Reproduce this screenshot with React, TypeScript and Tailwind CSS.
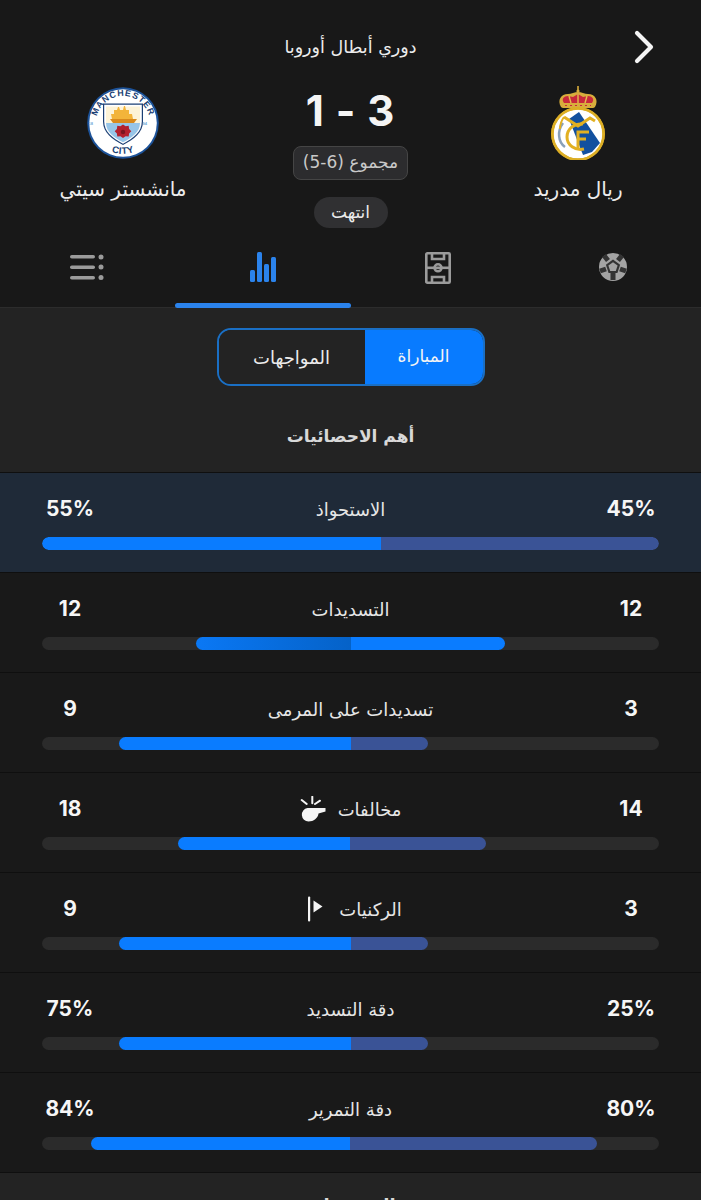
import React from 'react';

const sans = 'font-["Inter","DejaVu_Sans",sans-serif]';

interface StatRow {
  label: string;
  home: string;
  away: string;
  homeWidth: number;
  awayWidth: number;
  icon?: React.ReactNode;
  homeColor?: string;
  awayColor?: string;
}

function WhistleIcon() {
  return (
    <svg width="26" height="26" viewBox="0 0 26 26" fill="#f4f4f4" stroke="none">
      <path d="M7.500 12H25.500v3.500l-7 2c-.5 4.500-5 8-10 8A6.800 6.800 0 0 1 7.500 12z" />
      <path d="M1.700 4l5 4M12.300 .7v6.600M20 4.700L15 8" stroke="#f4f4f4" strokeWidth="2" strokeLinecap="round" />
    </svg>
  );
}

function CornerFlagIcon() {
  return (
    <svg className="ml-[8px]" width="20" height="26" viewBox="0 0 20 26" fill="#f4f4f4">
      <rect x="1" y="0.500" width="2.200" height="25" rx="1" />
      <path d="M6.500 4.500L15.500 10.500 6.500 16.500z" />
    </svg>
  );
}

const stats: StatRow[] = [
  { label: 'الاستحواذ', home: '45%', away: '55%', homeWidth: 45, awayWidth: 55 },
  {
    label: 'التسديدات',
    home: '12',
    away: '12',
    homeWidth: 25,
    awayWidth: 25,
    homeColor: 'bg-[#0a7cff]',
    awayColor: 'bg-gradient-to-r from-[#0a78f5] to-[#0562c8]',
  },
  { label: 'تسديدات على المرمى', home: '3', away: '9', homeWidth: 12.5, awayWidth: 37.5 },
  { label: 'مخالفات', home: '14', away: '18', homeWidth: 22, awayWidth: 28, icon: <WhistleIcon /> },
  { label: 'الركنيات', home: '3', away: '9', homeWidth: 12.5, awayWidth: 37.5, icon: <CornerFlagIcon /> },
  { label: 'دقة التسديد', home: '25%', away: '75%', homeWidth: 12.5, awayWidth: 37.5 },
  { label: 'دقة التمرير', home: '80%', away: '84%', homeWidth: 40, awayWidth: 42 },
];

function CityCrest() {
  return (
    <svg width="72" height="72" viewBox="0 0 72 72">
      <defs>
        <path id="cityTop" d="M9 36a27 27 0 0 1 54 0" />
        <path id="cityBottom" d="M5 36a31 31 0 0 0 62 0" />
      </defs>
      <circle cx="36" cy="36" r="35.800" fill="#1c5299" />
      <circle cx="36" cy="36" r="33.800" fill="#fff" />
      <text fontFamily="Liberation Sans, sans-serif" fontWeight="700" fontSize="8.800" fill="#1b3f74" letterSpacing="0.900">
        <textPath href="#cityTop" startOffset="50%" textAnchor="middle">MANCHESTER</textPath>
      </text>
      <text fontFamily="Liberation Sans, sans-serif" fontWeight="700" fontSize="9.500" fill="#1b3f74" letterSpacing="0.500">
        <textPath href="#cityBottom" startOffset="50%" textAnchor="middle">CITY</textPath>
      </text>
      <text x="6" y="38" fontSize="4" fontFamily="Liberation Sans, sans-serif" fontWeight="700" fill="#6fa8d6">18</text>
      <text x="60" y="38" fontSize="4" fontFamily="Liberation Sans, sans-serif" fontWeight="700" fill="#6fa8d6">94</text>
      <path d="M16 16.500h40v18c0 11-9 18-20 23.500-11-5.500-20-12.500-20-23.500z" fill="#1b3f74" />
      <path d="M17.200 17.700h37.600v16.800c0 10-8 16.500-18.800 22.200-10.800-5.700-18.800-12.200-18.800-22.200z" fill="#fff" />
      <path d="M19 19.500h34V36H19z" fill="#fdf3d7" />
      <path d="M19 36h34c0 9-8 14.500-17 19.200C27 50.500 19 45 19 36z" fill="#97c5e8" />
      <path d="M25 32l-1-5h3v-4h3l1-3h1l1 3h3l1-4h1l1 4h3v4h3l1 5z" fill="#f3b43a" />
      <path d="M23 32h27l-3 4H26z" fill="#d98a1d" />
      <path d="M36 37.500l2.600 1.700 3.100-.4.400 3.100 2.200 2.300-2.200 2.300-.4 3.100-3.100-.4-2.600 1.700-2.600-1.700-3.100.4-.4-3.100-2.200-2.300 2.200-2.300.4-3.100 3.100.4z" fill="#b3202e" />
      <circle cx="36" cy="45" r="2.200" fill="#7a1520" />
    </svg>
  );
}

function MadridCrest() {
  return (
    <svg width="56" height="74" viewBox="0 0 56 74">
      <path d="M27.200 0h1.600v4h-1.600z" fill="#d8ad3c" />
      <circle cx="28" cy="5" r="1.600" fill="#d8ad3c" />
      <path d="M11 21c-4-7 0-13 7-13 3 0 7-2 10-2s7 2 10 2c7 0 11 6 7 13z" fill="#d8ad3c" />
      <path d="M14 17c-3-4 0-7 4-7l5 1 5-3 5 3 5-1c4 0 7 3 4 7z" fill="#c8283c" />
      <path d="M19 10l2 7M28 8v9M37 10l-2 7" stroke="#e5bd4c" strokeWidth="1.400" />
      <rect x="11" y="17" width="34" height="5" rx="2" fill="#d8ad3c" />
      <path d="M15 19.500h26" stroke="#c8283c" strokeWidth="1.200" strokeDasharray="2 3" />
      <circle cx="28" cy="48" r="27" fill="#dcae25" />
      <circle cx="28" cy="48" r="24.500" fill="#fff" />
      <path d="M19 33l10-7 21 31-8 9-9 3z" fill="#12509f" />
      <path d="M13 37c-6 8-5 19 2 24" fill="none" stroke="#8aa0b8" strokeWidth="2.500" />
      <path d="M14 31l14 9 12-8 5 3" fill="none" stroke="#e2b022" strokeWidth="3" />
      <path d="M14 31c-3 4-4 8-4 12" fill="none" stroke="#e2b022" strokeWidth="2" />
      <path d="M33 38c-9-1-16 5-16 13s8 14 17 12" fill="none" stroke="#e2b022" strokeWidth="3" />
      <path d="M28 63V46h11M28 53h8" fill="none" stroke="#e2b022" strokeWidth="3" />
      <circle cx="28" cy="48" r="25.500" fill="none" stroke="#dcae25" strokeWidth="2.500" />
    </svg>
  );
}

function ScoreHeader() {
  return (
    <div className="grid grid-cols-[246px_1fr_246px] mt-[22px]">
      <div className="flex flex-col items-center">
        <div className="h-[74px]"><MadridCrest /></div>
        <div className="mt-[14px] text-[20px] leading-[30px] text-[#ececec]">ريال مدريد</div>
      </div>
      <div className="flex flex-col items-center">
        <div dir="ltr" className={`${sans} text-[42px] font-bold leading-[50px] text-[#f4f4f4] tracking-[1px] whitespace-pre`}>1 - 3</div>
        <div className="mt-[10px] h-[34px] w-[115px] flex items-center justify-center rounded-[8px] border border-[#454545] bg-[#2c2c2e] text-[17px] text-[#c9c9c9]">
          مجموع (6-5)
        </div>
        <div className="mt-[17px] h-[31px] w-[74px] flex items-center justify-center rounded-full bg-[#303032] text-[17px] text-[#ececec]">
          انتهت
        </div>
      </div>
      <div className="flex flex-col items-center">
        <div className="h-[74px] pt-[1px]"><CityCrest /></div>
        <div className="mt-[14px] text-[20px] leading-[30px] text-[#ececec]">مانشستر سيتي</div>
      </div>
    </div>
  );
}

function TabBar() {
  return (
    <div className="grid grid-cols-4 mt-[24px] h-[56px] border-b border-[#2c2c2c]">
      <div className="flex justify-center">
        <svg width="30" height="30" viewBox="0 0 30 30">
          <circle cx="15" cy="15" r="14" fill="#a3a3a3" />
          <path d="M15 7.500l7.100 5.200-2.700 8.300h-8.800l-2.700-8.300z" fill="#333" />
          <path d="M20 8.500L24 3.500M22 17L28 19M15 21v7M8 17L2 19M10 8.500L6 3.500" stroke="#333" strokeWidth="5" />
          <path d="M15 10.200l4.600 3.300-1.800 5.400h-5.600l-1.800-5.400z" fill="#a3a3a3" />
        </svg>
      </div>
      <div className="flex justify-center">
        <svg width="26" height="32" viewBox="0 0 26 32" fill="none" stroke="#9b9b9b" strokeWidth="2.600">
          <rect x="1.300" y="1.300" width="23.400" height="29.400" rx="1" />
          <path d="M1 15.800h24" />
          <circle cx="13" cy="15.800" r="3.500" />
          <path d="M7 1v6h12V1M7 31v-6h12v6" />
        </svg>
      </div>
      <div className="relative flex justify-center">
        <svg width="26" height="30" viewBox="0 0 26 30" fill="#2b83ec">
          <rect x="0" y="18" width="5" height="12" rx="1.500" />
          <rect x="7" y="0" width="5" height="30" rx="1.500" />
          <rect x="14" y="12" width="5" height="18" rx="1.500" />
          <rect x="21" y="5" width="5" height="25" rx="1.500" />
        </svg>
        <div className="absolute bottom-[-1px] inset-x-0 h-[5px] rounded-full bg-[#2b83ec]" />
      </div>
      <div className="flex justify-center pt-[2px]">
        <svg width="36" height="28" viewBox="0 0 36 28" fill="#9b9b9b">
          <rect x="0" y="1" width="25" height="3.500" rx="1.750" />
          <rect x="0" y="11.500" width="25" height="3.500" rx="1.750" />
          <rect x="0" y="22" width="25" height="3.500" rx="1.750" />
          <circle cx="31" cy="3" r="2.500" />
          <circle cx="31" cy="13" r="2.500" />
          <circle cx="31" cy="23.500" r="2.500" />
        </svg>
      </div>
    </div>
  );
}

function StatItem({ row, first }: { row: StatRow; first: boolean }) {
  return (
    <div className={`h-[100px] px-[42px] pt-[24px] border-b border-[#0f0f0f] ${first ? 'bg-[#1f2a38]' : 'bg-[#191919]'}`}>
      <div className="flex items-center justify-between h-[24px]">
        <div className={`${sans} w-[56px] text-center text-[21px] font-bold text-[#f6f6f6]`}>{row.home}</div>
        <div className="flex items-center gap-[12px] text-[18px] text-[#e6e6e6]">
          {row.label}
          {row.icon}
        </div>
        <div className={`${sans} w-[56px] text-center text-[21px] font-bold text-[#f6f6f6]`}>{row.away}</div>
      </div>
      <div dir="ltr" className="mt-[16px] flex h-[13px] rounded-full overflow-hidden bg-[#2b2b2b]">
        {/* bars grow out from the middle, except when they fill the whole track */}
        <div
          className={`${row.awayColor ?? 'bg-[#0a7cff]'} rounded-l-full`}
          style={{ width: `${row.awayWidth}%`, marginLeft: `${Math.max(0, 50 - row.awayWidth)}%` }}
        />
        <div className={`${row.homeColor ?? 'bg-[#3a5396]'} rounded-r-full`} style={{ width: `${row.homeWidth}%` }} />
      </div>
    </div>
  );
}

export default function App() {
  return (
    <div dir="rtl" className='h-[1200px] overflow-hidden bg-[#181818] font-["DejaVu_Sans",sans-serif]'>
      <div className="grid grid-cols-[1fr_auto_1fr] items-center h-[64px] pt-[30px]">
        <div className="flex justify-start pr-[47px]">
          <svg width="20" height="34" viewBox="0 0 20 34" fill="none" stroke="#f4f4f4" strokeWidth="4.200" strokeLinecap="round" strokeLinejoin="round">
            <path d="M3 3l14 14L3 31" />
          </svg>
        </div>
        <div className="text-[17.500px] font-medium text-[#ececec]">دوري أبطال أوروبا</div>
        <div />
      </div>
      <ScoreHeader />
      <TabBar />
      <div className="bg-[#232323] h-[165px] flex flex-col items-center border-b border-[#0f0f0f]">
        <div className="mt-[20px] flex w-[268px] h-[58px] rounded-[14px] border-2 border-[#1a6fc4] overflow-hidden">
          <div className="w-[118px] flex items-center justify-center bg-[#087bff] text-[17px] text-[#f4f4f4]">المباراة</div>
          <div className="flex-1 flex items-center justify-center bg-[#232323] text-[18px] text-[#ececec]">المواجهات</div>
        </div>
        <div className="mt-[38px] text-[17px] font-bold text-[#d8d8d8]">أهم الاحصائيات</div>
      </div>
      {stats.map((row, i) => (
        <StatItem key={row.label} row={row} first={i === 0} />
      ))}
      <div className="bg-[#232323] h-[40px] pt-[19px] text-center text-[18px] font-bold text-[#d8d8d8]">التسديدات</div>
    </div>
  );
}
